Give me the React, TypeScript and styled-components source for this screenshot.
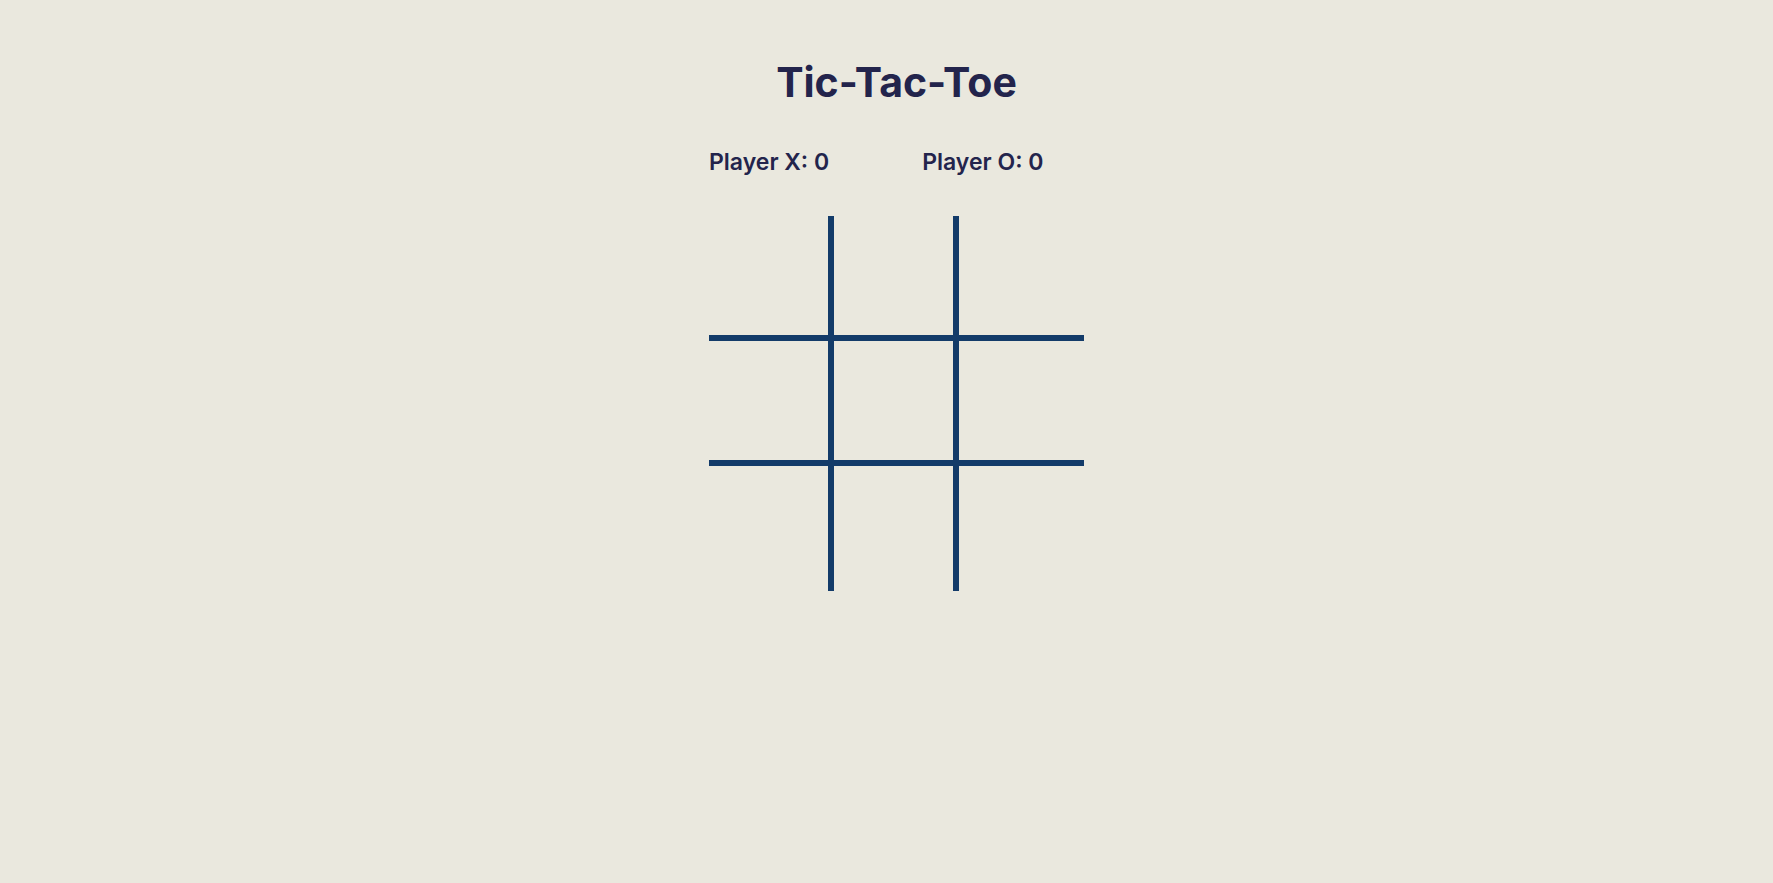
import React from "react";
import styled, { createGlobalStyle } from "styled-components";

const GlobalStyle = createGlobalStyle`
  html, body {
    margin: 0;
    padding: 0;
    background: #eae8de;
    font-family: "Inter", "Noto Sans", sans-serif;
  }
`;

const Page = styled.main`
  min-height: 100vh;
  display: flex;
  flex-direction: column;
  align-items: center;
  padding-left: 20px;
  box-sizing: border-box;
`;

const Title = styled.h1`
  margin: 56px 0 0;
  font-size: 41px;
  line-height: 52px;
  font-weight: 700;
  color: #23244c;
`;

const Column = styled.div`
  width: 375px;
  display: flex;
  flex-direction: column;
`;

const ScoreBoard = styled.div`
  display: flex;
  gap: 93px;
  margin-top: 40px;
`;

const Score = styled.span`
  font-size: 23px;
  line-height: 28px;
  font-weight: 600;
  color: #23244c;
  white-space: nowrap;
`;

const Board = styled.div`
  display: grid;
  grid-template-columns: repeat(3, 125px);
  grid-template-rows: repeat(3, 125px);
  margin-top: 40px;
`;

const Cell = styled.button<{ $right: boolean; $bottom: boolean }>`
  box-sizing: border-box;
  width: 125px;
  height: 125px;
  padding: 0;
  background: transparent;
  border: none;
  border-right: ${(p) => (p.$right ? "6px solid #133b69" : "none")};
  border-bottom: ${(p) => (p.$bottom ? "6px solid #133b69" : "none")};
  cursor: pointer;
`;

const App: React.FC = () => {
  const cells = Array.from({ length: 9 }, (_, i) => i);

  return (
    <>
      <GlobalStyle />
      <Page>
        <Title>Tic-Tac-Toe</Title>
        <Column>
          <ScoreBoard>
            <Score>Player X: 0</Score>
            <Score>Player O: 0</Score>
          </ScoreBoard>
          <Board>
            {cells.map((i) => (
              <Cell key={i} $right={i % 3 !== 2} $bottom={i < 6} />
            ))}
          </Board>
        </Column>
      </Page>
    </>
  );
};

export default App;
